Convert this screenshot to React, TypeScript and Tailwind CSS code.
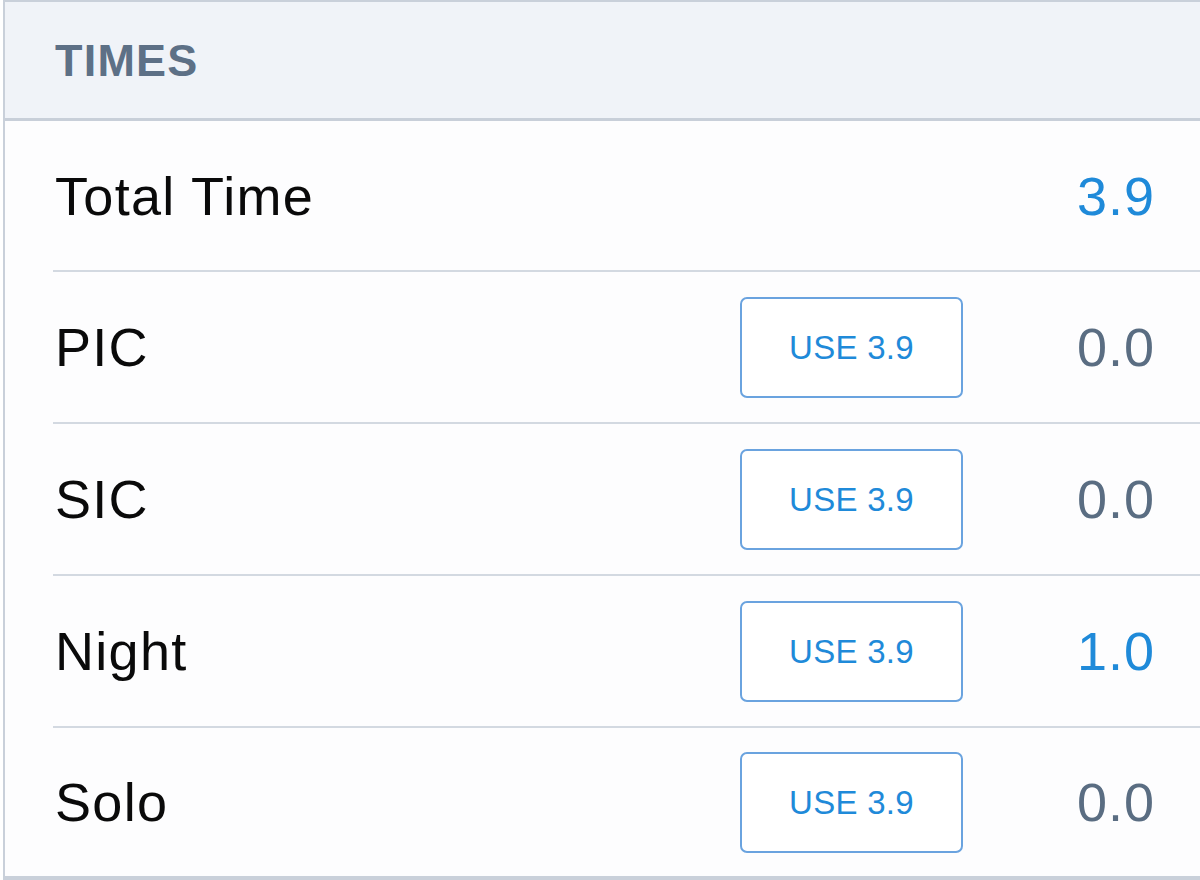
import React from "react";

const rows: { label: string; value: string; blue: boolean }[] = [
  { label: "PIC", value: "0.0", blue: false },
  { label: "SIC", value: "0.0", blue: false },
  { label: "Night", value: "1.0", blue: true },
  { label: "Solo", value: "0.0", blue: false },
];

export default function App() {
  return (
    <div
      className="w-[1200px] h-[880px] bg-white pl-[3px] overflow-hidden"
      style={{ fontFamily: '"Liberation Sans", Arial, sans-serif' }}
    >
      <div className="h-full flex flex-col border-l-2 border-t-2 border-b-[4px] border-[#c9d0da] bg-[#fdfdfe]">
        <div className="h-[119px] shrink-0 bg-[#f0f3f8] border-b-[3px] border-[#c8cfd9] flex items-center pl-[50px]">
          <span className="text-[45px] font-bold tracking-[1.2px] text-[#5d7086] leading-none">
            TIMES
          </span>
        </div>
        <div className="ml-[48px] h-[151px] shrink-0 border-b-2 border-[#d3d9e1] flex items-center justify-between pr-[45px]">
          <span className="text-[54px] tracking-[1.3px] text-[#0a0a0a] leading-none pl-[2px]">Total Time</span>
          <span className="text-[54px] tracking-[1px] text-[#1f8ad9] leading-none">3.9</span>
        </div>
        {rows.map((r, i) => (
          <div
            key={r.label}
            className={
              i < rows.length - 1
                ? "ml-[48px] h-[152px] shrink-0 border-b-2 border-[#d3d9e1] flex items-center pr-[45px]"
                : "ml-[48px] flex-1 flex items-center pr-[45px]"
            }
          >
            <span className="flex-1 text-[54px] tracking-[1.3px] text-[#0a0a0a] leading-none pl-[2px]">{r.label}</span>
            <button className="w-[223px] h-[101px] border-2 border-[#6aa3df] rounded-[7px] bg-white text-[33px] tracking-[0.3px] text-[#1f8ad9] leading-none flex items-center justify-center">
              USE 3.9
            </button>
            <span
              className={
                r.blue
                  ? "w-[192px] text-right text-[54px] tracking-[1px] text-[#1f8ad9] leading-none"
                  : "w-[192px] text-right text-[54px] tracking-[1px] text-[#5a6d82] leading-none"
              }
            >
              {r.value}
            </span>
          </div>
        ))}
      </div>
    </div>
  );
}
